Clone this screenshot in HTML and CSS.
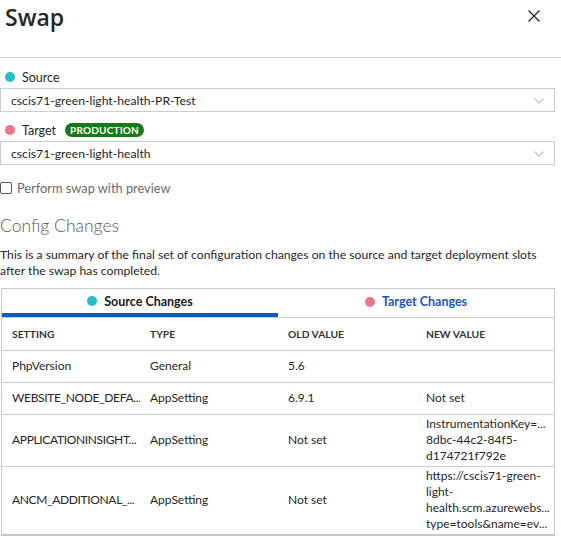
FILE: index.html
```html
<!DOCTYPE html>
<html lang="en">
<head>
<meta charset="utf-8">
<title>Swap</title>
<link rel="stylesheet" href="styles.css">
</head>
<body>
<div class="blade">
  <header class="blade-header">
    <h1 class="title">Swap</h1>
    <button class="close" aria-label="Close">
      <svg width="12" height="12" viewBox="0 0 12 12"><path d="M0.5 0.5 L11.5 11.5 M11.5 0.5 L0.5 11.5" stroke="#222" stroke-width="1.2" fill="none"/></svg>
    </button>
  </header>

  <div class="content">
    <div class="field-label field-first"><span class="dot dot-source"></span>Source</div>
    <div class="select"><span>cscis71-green-light-health-PR-Test</span>
      <svg class="chev" width="10" height="6" viewBox="0 0 10 6"><path d="M0.5 0.5 L5 5 L9.5 0.5" stroke="#c4c4c4" stroke-width="1.3" fill="none"/></svg>
    </div>

    <div class="field-label"><span class="dot dot-target"></span>Target<span class="badge">PRODUCTION</span></div>
    <div class="select"><span>cscis71-green-light-health</span>
      <svg class="chev" width="10" height="6" viewBox="0 0 10 6"><path d="M0.5 0.5 L5 5 L9.5 0.5" stroke="#c4c4c4" stroke-width="1.3" fill="none"/></svg>
    </div>

    <label class="check"><span class="box"></span>Perform swap with preview</label>

    <h2 class="section-title">Config Changes</h2>
    <p class="desc">This is a summary of the final set of configuration changes on the source and target deployment slots after the swap has completed.</p>

    <div class="changes">
      <div class="tabs">
        <div class="tab tab-active"><span class="dot dot-source"></span>Source Changes</div>
        <div class="tab tab-link"><span class="dot dot-target"></span>Target Changes</div>
      </div>
      <table class="grid">
        <thead>
          <tr><th>SETTING</th><th>TYPE</th><th>OLD VALUE</th><th>NEW VALUE</th></tr>
        </thead>
        <tbody>
          <tr><td>PhpVersion</td><td>General</td><td>5.6</td><td></td></tr>
          <tr><td class="key">WEBSITE_NODE_DEFA...</td><td>AppSetting</td><td>6.9.1</td><td>Not set</td></tr>
          <tr><td class="key">APPLICATIONINSIGHT...</td><td>AppSetting</td><td>Not set</td><td class="multi">InstrumentationKey=...<br>8dbc-44c2-84f5-<br>d174721f792e</td></tr>
          <tr><td class="key">ANCM_ADDITIONAL_...</td><td>AppSetting</td><td>Not set</td><td class="multi">https://cscis71-green-<br>light-<br>health.scm.azurewebs...<br>type=tools&amp;name=ev...</td></tr>
        </tbody>
      </table>
    </div>
  </div>
</div>
</body>
</html>
```
FILE: styles.css
```css
* { box-sizing: border-box; }
html, body { margin: 0; padding: 0; background: #fff; }
body {
  font-family: Lato, "Open Sans", sans-serif;
  font-size: 12px;
  color: #262626;
}
.blade { width: 561px; }
.blade-header {
  height: 58px;
  border-bottom: 1px solid #cfcfcf;
  display: flex;
  justify-content: space-between;
  align-items: flex-start;
}
.title {
  margin: 0;
  padding: 3px 0 0 5px;
  font-family: "Open Sans", sans-serif;
  font-size: 23px;
  font-weight: 600;
  line-height: 28px;
  color: #262626;
}
.close {
  border: 0;
  background: none;
  padding: 0;
  margin: 10px 21px 0 0;
  width: 12px;
  height: 12px;
  display: flex;
}
.content { padding: 0 6px 0 0; }
.field-label {
  display: flex;
  align-items: center;
  height: 18px;
  margin-top: 9px;
  padding-left: 5px;
  font-size: 12.5px;
  color: #262626;
}
.field-label.field-first { margin-top: 10px; }
.field-label + .select { margin-top: 2px; }
.dot {
  width: 10px;
  height: 10px;
  border-radius: 50%;
  display: inline-block;
  margin-right: 7px;
  flex: none;
}
.dot-source { background: #22bfcb; }
.dot-target { background: #f07489; }
.badge {
  margin-left: 9px;
  background: #137c16;
  color: #fff;
  font-weight: 700;
  font-size: 10px;
  letter-spacing: 0.2px;
  border-radius: 7px;
  height: 14px;
  line-height: 14px;
  padding: 0 5px;
}
.select {
  height: 24px;
  border: 1px solid #cccccc;
  display: flex;
  align-items: center;
  justify-content: space-between;
  padding: 0 10px 0 10px;
  font-size: 12.2px;
  color: #262626;
}
.chev { margin-top: 2px; }
.check {
  display: flex;
  align-items: center;
  margin-top: 15px;
  color: #6b6b6b;
  font-size: 12.8px;
}
.box {
  width: 12px;
  height: 12px;
  border: 1px solid #555;
  border-radius: 2px;
  margin-right: 5px;
}
.section-title {
  margin: 18px 0 0 0;
  font-size: 17.5px;
  font-weight: 300;
  color: #5a5a5a;
  line-height: 24px;
}
.desc {
  margin: 9px 0 0 0;
  line-height: 16px;
  font-size: 12.2px;
  color: #262626;
}
.changes {
  margin-top: 9px;
  margin-left: 1px;
  border: 1px solid #cccccc;
  border-bottom: 2px solid #c6c6c6;
}
.tabs {
  display: grid;
  grid-template-columns: 1fr 1fr;
  border-bottom: 1px solid #cccccc;
}
.tab {
  height: 28px;
  display: flex;
  align-items: center;
  justify-content: center;
  font-weight: 700;
  font-size: 12.5px;
  padding-bottom: 3px;
}
.tab-active {
  color: #1b1b1b;
  border-bottom: 4px solid #0b5bc4;
  padding-bottom: 0;
}
.tab-link { color: #1856c3; }
.grid {
  width: 100%;
  border-collapse: collapse;
  table-layout: fixed;
}
.grid th {
  text-align: left;
  font-size: 10.3px;
  font-weight: 700;
  color: #333;
  height: 32px;
  padding: 0 10px;
  border-bottom: 1px solid #cccccc;
}
.grid td {
  height: 32px;
  padding: 1px 10px 2px;
  border-bottom: 1px solid #cccccc;
  line-height: 16px;
  white-space: nowrap;
  overflow: hidden;
  color: #262626;
}
.grid td.key { letter-spacing: -0.35px; padding-right: 0; }
.grid tbody tr:last-child td { border-bottom: 0; }
```
